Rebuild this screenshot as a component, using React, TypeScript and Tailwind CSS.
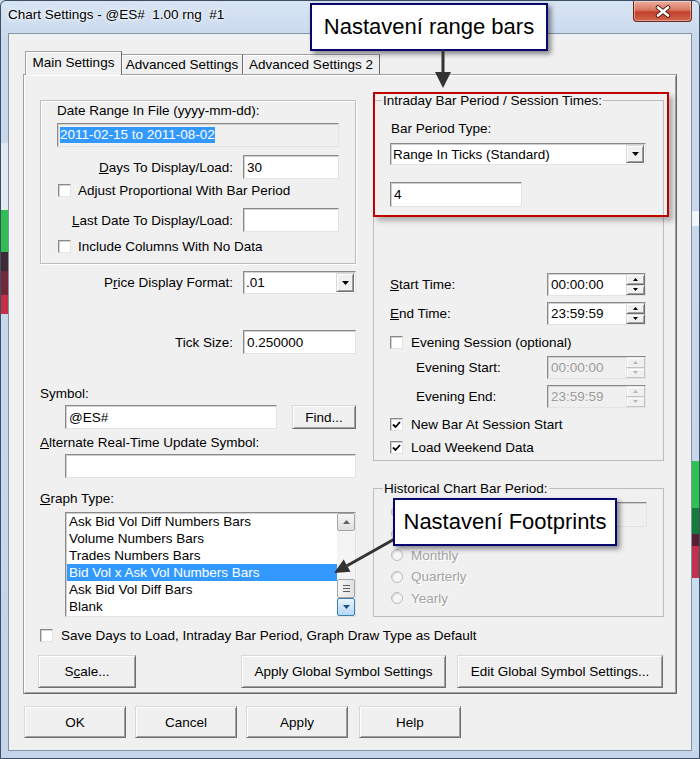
import React from "react";

const sunken =
  "border border-t-[#8a8a8a] border-l-[#8a8a8a] border-r-[#e3e3e3] border-b-[#e3e3e3] shadow-[inset_1px_1px_0_#d0d0d0]";
const raised =
  "bg-[#f0f0f0] border border-t-[#d8d8d8] border-l-[#d8d8d8] border-r-[#6f6f6f] border-b-[#6f6f6f] shadow-[inset_1px_1px_0_#fff,inset_-1px_-1px_0_#a0a0a0]";
const raisedDis =
  "bg-[#f0f0f0] border border-t-[#e6e6e6] border-l-[#e6e6e6] border-r-[#c4c4c4] border-b-[#c4c4c4] shadow-[inset_1px_1px_0_#fff]";

function Check({ checked = false }: { checked?: boolean }) {
  return (
    <div className={"w-[13px] h-[13px] shrink-0 bg-white flex items-center justify-center " + sunken}>
      {checked && (
        <svg width="9" height="8" viewBox="0 0 9 8">
          <path d="M1 3.5 L3.5 6 L8 1" fill="none" stroke="#000" strokeWidth="1.8" />
        </svg>
      )}
    </div>
  );
}

function Combo({ text, className }: { text: string; className: string }) {
  return (
    <div className={"flex items-stretch bg-white " + sunken + " " + className}>
      <div className="flex-1 flex items-center pl-[2px]">{text}</div>
      <div className={"w-[18px] m-[1px] flex items-center justify-center " + raised}>
        <svg width="7" height="4" viewBox="0 0 7 4">
          <path d="M0 0h7L3.5 4z" fill="#000" />
        </svg>
      </div>
    </div>
  );
}

function Spin({ text, disabled = false }: { text: string; disabled?: boolean }) {
  const tri = disabled ? "#b4b4b4" : "#000";
  return (
    <div className={"w-[99px] h-[23px] flex " + sunken + (disabled ? " bg-[#f0f0f0]" : " bg-white")}>
      <div className={"flex-1 flex items-center pl-[3px] " + (disabled ? "text-[#9c9c9c]" : "")}>{text}</div>
      <div className="w-[19px] flex flex-col">
        <div className={"flex-1 flex items-center justify-center " + (disabled ? raisedDis : raised)}>
          <svg width="5" height="3" viewBox="0 0 5 3">
            <path d="M0 3h5L2.5 0z" fill={tri} />
          </svg>
        </div>
        <div className={"flex-1 flex items-center justify-center " + (disabled ? raisedDis : raised)}>
          <svg width="5" height="3" viewBox="0 0 5 3">
            <path d="M0 0h5L2.5 3z" fill={tri} />
          </svg>
        </div>
      </div>
    </div>
  );
}

function Radio({ label }: { label?: string }) {
  return (
    <div className="flex items-center h-[21.5px] pl-[17px] gap-[8px]">
      <div className="w-[12px] h-[12px] rounded-full border border-[#bdbdbd] bg-[#f6f6f6] shadow-[inset_1px_1px_1px_#d6d6d6]" />
      {label && <span className="text-[#a3a3a3] [text-shadow:1px_1px_0_#fff]">{label}</span>}
    </div>
  );
}

const items = [
  "Ask Bid Vol Diff Numbers Bars",
  "Volume Numbers Bars",
  "Trades Numbers Bars",
  "Bid Vol x Ask Vol Numbers Bars",
  "Ask Bid Vol Diff Bars",
  "Blank",
];

export default function App() {
  return (
    <div className="relative w-[700px] h-[759px] overflow-hidden bg-[#c8daef] font-['Liberation_Sans',Arial,sans-serif] text-[13.5px] leading-[15px] text-black">
      <div className="flex flex-col w-[700px] h-[759px] border border-[#3f4f63] rounded-t-[6px] bg-[linear-gradient(180deg,#d7e4f3_0%,#c8d9ed_40px,#c5d6eb_100%)]">
        {/* title bar */}
        <div className="flex items-start h-[32px] shrink-0">
          <div className="pl-[7px] pt-[6px] whitespace-pre [text-shadow:0_0_6px_#fff,0_0_3px_#fff]">
            Chart Settings - @ES#  1.00 rng  #1
          </div>
          <div className="ml-auto mr-[7px] w-[59px] h-[21px] rounded-b-[4px] border border-t-0 border-[#6b2a22] bg-[linear-gradient(180deg,#eab0a2_0%,#d9775f_45%,#c2402b_55%,#d3674d_100%)] shadow-[inset_0_0_0_1px_rgba(255,255,255,0.35)] flex items-center justify-center">
            <svg width="18" height="13" viewBox="0 0 18 13">
              <path d="M4 2.5 L14 10.5 M14 2.5 L4 10.5" stroke="#5a2018" strokeWidth="4.5" strokeLinecap="round" />
              <path d="M4 2.5 L14 10.5 M14 2.5 L4 10.5" stroke="#fff" strokeWidth="2.6" strokeLinecap="round" />
            </svg>
          </div>
        </div>

        <div className="flex h-[718px] shrink-0">
          {/* left frame */}
          <div className="w-[7px] flex flex-col">
            <div className="h-[110px]" />
            <div className="h-[67px] bg-[#e2eaf4]" />
            <div className="h-[42px] bg-[#2dbf50]" />
            <div className="h-[19px] bg-[#3e2a35]" />
            <div className="h-[24px] bg-[#73283a]" />
            <div className="h-[19px] bg-[#c52f47]" />
          </div>

          {/* client */}
          <div className="w-[684px] flex flex-col bg-[#f0f0f0] border border-[#8592a3] px-[14px] pt-[17px]">
            {/* tabs */}
            <div className="flex items-end h-[23px] pl-[2px]">
              <div className="relative z-10 -mb-[1px] w-[97px] h-[24px] bg-[#f0f0f0] border-t border-l border-r border-t-[#a0a0a0] border-l-[#a0a0a0] border-r-[#696969] shadow-[inset_1px_1px_0_#fff] flex items-center justify-center pb-[2px]">
                Main Settings
              </div>
              <div className="w-[121px] h-[20px] bg-[#f0f0f0] border-t border-r border-t-[#a0a0a0] border-r-[#696969] shadow-[inset_1px_1px_0_#fff] flex items-center justify-center">
                Advanced Settings
              </div>
              <div className="w-[137px] h-[20px] bg-[#f0f0f0] border-t border-r border-t-[#a0a0a0] border-r-[#696969] shadow-[inset_1px_1px_0_#fff] flex items-center justify-center">
                Advanced Settings 2
              </div>
            </div>

            {/* panel */}
            <div className="h-[620px] bg-[#f0f0f0] border border-t-[#a0a0a0] border-l-[#a0a0a0] border-r-[#696969] border-b-[#696969] shadow-[inset_1px_1px_0_#fff,inset_-1px_-1px_0_#a0a0a0] flex flex-col">
              <div className="flex items-start pl-[16px] pr-[12px]">
                {/* left column */}
                <div className="w-[316px] mt-[25px] flex flex-col">
                  <div className="h-[164px] border border-[#bdbdbd] shadow-[inset_1px_1px_0_#fff,1px_1px_0_#fff] flex flex-col">
                    <div className="mt-[2px] ml-[16px]">Date Range In File (yyyy-mm-dd):</div>
                    <div className={"mt-[5px] ml-[16px] w-[282px] h-[24px] bg-[#f0f0f0] flex items-center pl-[2px] " + sunken}>
                      <span className="bg-[#3399ff] text-white leading-[16px]">2011-02-15 to 2011-08-02</span>
                    </div>
                    <div className="mt-[8px] h-[24px] flex items-center justify-end gap-[10px] pr-[16px]">
                      <span>
                        <u>D</u>ays To Display/Load:
                      </span>
                      <div className={"w-[96px] h-[24px] bg-white flex items-center pl-[3px] " + sunken}>30</div>
                    </div>
                    <div className="mt-[5px] ml-[17px] h-[13px] flex items-center gap-[7px]">
                      <Check />
                      <span>Adjust Proportional With Bar Period</span>
                    </div>
                    <div className="mt-[11px] h-[24px] flex items-center justify-end gap-[10px] pr-[16px]">
                      <span>
                        <u>L</u>ast Date To Display/Load:
                      </span>
                      <div className={"w-[96px] h-[24px] bg-white " + sunken} />
                    </div>
                    <div className="mt-[8px] ml-[17px] h-[13px] flex items-center gap-[7px]">
                      <Check />
                      <span>Include Columns With No Data</span>
                    </div>
                  </div>

                  <div className="mt-[7px] h-[23px] flex items-center justify-end gap-[10px]">
                    <span>
                      P<u>r</u>ice Display Format:
                    </span>
                    <Combo text=".01" className="w-[113px] h-[23px]" />
                  </div>
                  <div className="mt-[36px] h-[24px] flex items-center justify-end gap-[10px]">
                    <span>Tick Size:</span>
                    <div className={"w-[113px] h-[24px] bg-white flex items-center pl-[3px] " + sunken}>0.250000</div>
                  </div>
                  <div className="mt-[32px]">Symbol:</div>
                  <div className="mt-[4px] ml-[25px] h-[24px] flex gap-[15px]">
                    <div className={"w-[212px] h-[24px] bg-white flex items-center pl-[3px] " + sunken}>@ES#</div>
                    <div className={"w-[64px] h-[24px] flex items-center justify-center " + raised}>Find...</div>
                  </div>
                  <div className="mt-[6px]">
                    <u>A</u>lternate Real-Time Update Symbol:
                  </div>
                  <div className={"mt-[4px] ml-[25px] w-[291px] h-[24px] bg-white " + sunken} />
                  <div className="mt-[13px]">
                    <u>G</u>raph Type:
                  </div>
                  <div className={"mt-[6px] ml-[25px] w-[291px] h-[105px] bg-white flex " + sunken}>
                    <div className="flex-1 flex flex-col">
                      {items.map((t, i) => (
                        <div
                          key={t}
                          className={
                            "h-[17px] flex items-center pl-[2px] ml-[1px] " +
                            (i === 3 ? "bg-[#3399ff] text-white" : "")
                          }
                        >
                          {t}
                        </div>
                      ))}
                    </div>
                    <div className="w-[18px] flex flex-col bg-[#f4f4f4]">
                      <div className="h-[18px] rounded-[2px] border border-[#a5a5a5] bg-[linear-gradient(180deg,#f6f6f6,#dedede)] flex items-center justify-center">
                        <svg width="7" height="4" viewBox="0 0 7 4">
                          <path d="M0 4h7L3.5 0z" fill="#606060" />
                        </svg>
                      </div>
                      <div className="flex-1" />
                      <div className="h-[19px] rounded-[2px] border border-[#a5a5a5] bg-[linear-gradient(90deg,#f6f6f6,#e2e2e2)] flex flex-col items-center justify-center gap-[2px]">
                        <div className="w-[7px] h-[1px] bg-[#606060]" />
                        <div className="w-[7px] h-[1px] bg-[#606060]" />
                        <div className="w-[7px] h-[1px] bg-[#606060]" />
                      </div>
                      <div className="h-[18px] rounded-[2px] border border-[#3c7fb1] bg-[linear-gradient(180deg,#e8f4fd,#b4d8f5)] flex items-center justify-center">
                        <svg width="7" height="4" viewBox="0 0 7 4">
                          <path d="M0 0h7L3.5 4z" fill="#1d4f80" />
                        </svg>
                      </div>
                    </div>
                  </div>
                </div>

                {/* right column */}
                <div className="w-[291px] ml-[17px] mt-[18px] flex flex-col">
                  <fieldset className="h-[368px] border border-[#bdbdbd]">
                    <legend className="ml-[8px] px-[1px] leading-[15px]">Intraday Bar Period / Session Times:</legend>
                    <div className="flex flex-col">
                      <div className="mt-[13px] ml-[17px]">Bar Period Type:</div>
                      <Combo text="Range In Ticks (Standard)" className="mt-[7px] ml-[16px] w-[256px] h-[22px]" />
                      <div className={"mt-[17px] ml-[16px] w-[132px] h-[25px] bg-white flex items-center pl-[3px] " + sunken}>4</div>
                      <div className="mt-[66px] h-[23px] flex items-center justify-between pl-[16px] pr-[17px]">
                        <span>
                          <u>S</u>tart Time:
                        </span>
                        <Spin text="00:00:00" />
                      </div>
                      <div className="mt-[6px] h-[23px] flex items-center justify-between pl-[16px] pr-[17px]">
                        <span>
                          <u>E</u>nd Time:
                        </span>
                        <Spin text="23:59:59" />
                      </div>
                      <div className="mt-[11px] ml-[16px] h-[13px] flex items-center gap-[8px]">
                        <Check />
                        <span>Evening Session (optional)</span>
                      </div>
                      <div className="mt-[7px] h-[23px] flex items-center justify-between pl-[42px] pr-[17px]">
                        <span>Evening Start:</span>
                        <Spin text="00:00:00" disabled />
                      </div>
                      <div className="mt-[6px] h-[23px] flex items-center justify-between pl-[42px] pr-[17px]">
                        <span>Evening End:</span>
                        <Spin text="23:59:59" disabled />
                      </div>
                      <div className="mt-[10px] ml-[16px] h-[13px] flex items-center gap-[8px]">
                        <Check checked />
                        <span>New Bar At Session Start</span>
                      </div>
                      <div className="mt-[10px] ml-[16px] h-[13px] flex items-center gap-[8px]">
                        <Check checked />
                        <span>Load Weekend Data</span>
                      </div>
                    </div>
                  </fieldset>

                  <fieldset className="mt-[20px] h-[136px] border border-[#bdbdbd]">
                    <legend className="ml-[9px] px-[1px] leading-[15px]">Historical Chart Bar Period:</legend>
                    <div className="mt-[5.5px] flex flex-col">
                      <div className="flex items-start h-[21.5px]">
                        <Radio />
                        <div className={"ml-auto mr-[16px] w-[90px] h-[25px] bg-[#f0f0f0] " + sunken} />
                      </div>
                      <Radio />
                      <Radio label="Monthly" />
                      <Radio label="Quarterly" />
                      <Radio label="Yearly" />
                    </div>
                  </fieldset>
                </div>
              </div>

              <div className="mt-[12px] ml-[16px] h-[13px] flex items-center gap-[8px]">
                <Check />
                <span>Save Days to Load, Intraday Bar Period, Graph Draw Type as Default</span>
              </div>
              <div className="mt-[13px] h-[33px] flex pl-[14px]">
                <div className={"w-[98px] h-[33px] flex items-center justify-center " + raised}>
                  <span>
                    S<u>c</u>ale...
                  </span>
                </div>
                <div className={"ml-[105px] w-[205px] h-[33px] flex items-center justify-center " + raised}>
                  Apply Global Symbol Settings
                </div>
                <div className={"ml-[11px] w-[206px] h-[33px] flex items-center justify-center " + raised}>
                  Edit Global Symbol Settings...
                </div>
              </div>
            </div>

            {/* footer */}
            <div className="mt-[12px] flex pl-[1px]">
              <div className={"w-[102px] h-[32px] flex items-center justify-center " + raised}>OK</div>
              <div className={"ml-[9px] w-[102px] h-[32px] flex items-center justify-center " + raised}>Cancel</div>
              <div className={"ml-[9px] w-[102px] h-[32px] flex items-center justify-center " + raised}>Apply</div>
              <div className={"ml-[11px] w-[102px] h-[32px] flex items-center justify-center " + raised}>Help</div>
            </div>
          </div>

          {/* right frame */}
          <div className="w-[7px] flex flex-col">
            <div className="h-[178px]" />
            <div className="h-[15px] bg-[#f2f6fb]" />
            <div className="h-[235px]" />
            <div className="h-[47px] bg-[#2cc351]" />
            <div className="h-[26px] bg-[#167a3a]" />
            <div className="h-[12px] bg-[#5a1f33]" />
            <div className="h-[32px] bg-[#c0314b]" />
            <div className="flex-1 bg-[#cadcf0]" />
          </div>
        </div>
      </div>

      {/* overlays: red highlight */}
      <div className="absolute left-[373px] top-[92px] w-[296px] h-[125px] border-2 border-[#c00000] shadow-[4px_4px_5px_rgba(0,0,0,0.28)]" />

      {/* callout 1 */}
      <div className="absolute left-[310px] top-[3px] w-[238px] h-[48px] bg-white border-2 border-[#07076e] shadow-[3px_3px_5px_rgba(0,0,0,0.45)] flex items-center justify-center text-[22px] leading-[26px]">
        Nastavení range bars
      </div>
      <svg className="absolute left-[434px] top-[50px]" width="18" height="40" viewBox="0 0 18 40">
        <rect x="7.5" y="0" width="3" height="24" fill="#333" />
        <path d="M1 22 H17 L9 38 Z" fill="#333" />
      </svg>

      {/* callout 2 arrow */}
      <svg className="absolute left-[320px] top-[530px]" width="80" height="50" viewBox="0 0 80 50">
        <line x1="79" y1="6.5" x2="27" y2="35.7" stroke="#333" strokeWidth="3" />
        <path d="M14 43 L30.5 41.8 L23.7 29.6 Z" fill="#333" />
      </svg>
      <div className="absolute left-[393px] top-[498px] w-[224px] h-[48px] bg-white border-2 border-[#07076e] shadow-[3px_3px_5px_rgba(0,0,0,0.45)] flex items-center justify-center text-[22px] leading-[26px]">
        Nastavení Footprints
      </div>
    </div>
  );
}
